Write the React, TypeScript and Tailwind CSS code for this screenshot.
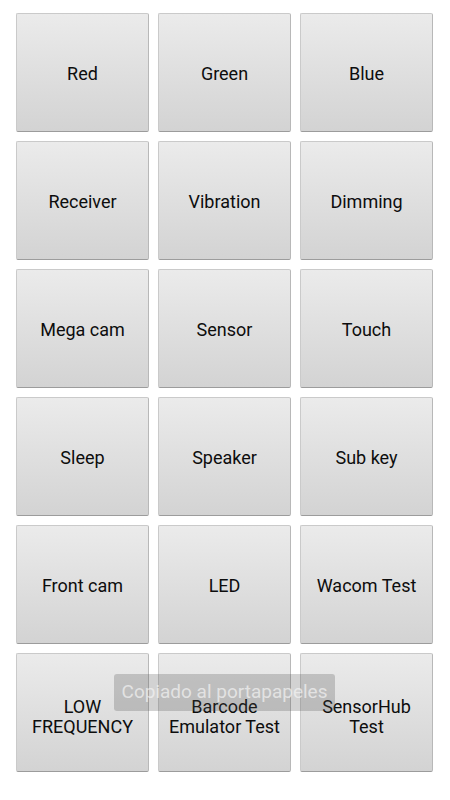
import React from 'react';

const items = [
  'Red', 'Green', 'Blue',
  'Receiver', 'Vibration', 'Dimming',
  'Mega cam', 'Sensor', 'Touch',
  'Sleep', 'Speaker', 'Sub key',
  'Front cam', 'LED', 'Wacom Test',
  'LOW\nFREQUENCY', 'Barcode\nEmulator Test', 'SensorHub\nTest',
];

function TestButton({ label }: { label: string }) {
  const twoLines = label.includes('\n');
  return (
    <div
      className={
        'flex h-[119px] items-center justify-center whitespace-pre-line rounded-[2px] border border-[#cacaca] border-b-[#9c9c9c] border-r-[#b8b8b8] bg-gradient-to-b from-[#ebebeb] to-[#d3d3d3] text-center text-[18px] leading-[20px] text-[#0d0d0d] ' +
        (twoLines ? 'pt-[9px]' : 'pt-[2px]')
      }
    >
      {label}
    </div>
  );
}

export default function App() {
  return (
    <div className="relative h-[800px] w-[450px] bg-white font-['Roboto',sans-serif]">
      <div className="grid grid-cols-3 gap-[9px] pl-[16px] pr-[17px] pt-[13px]">
        {items.map((it) => (
          <TestButton key={it} label={it} />
        ))}
      </div>
      <div className="absolute left-[114px] top-[674px] flex h-[37px] w-[221px] items-center justify-center rounded-[3px] bg-[#4a4a4a]/25 text-[19px] text-[#f4f4f4]/70">
        Copiado al portapapeles
      </div>
    </div>
  );
}
